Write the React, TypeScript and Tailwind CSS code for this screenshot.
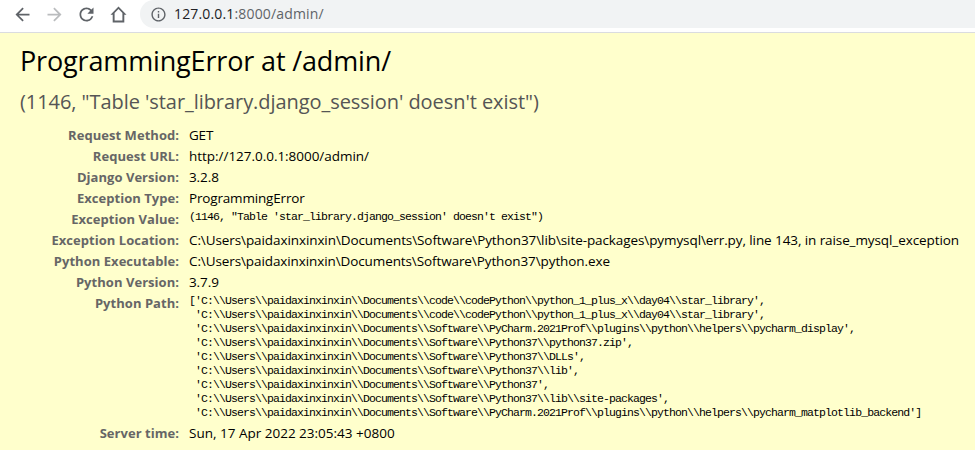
import { MdArrowBack, MdArrowForward, MdInfoOutline, MdRefresh } from 'react-icons/md';

const sans = "font-['Open_Sans','Noto_Sans',sans-serif]";
const mono = "font-['Liberation_Mono',monospace]";

const pythonPath = [
  "['C:\\\\Users\\\\paidaxinxinxin\\\\Documents\\\\code\\\\codePython\\\\python_1_plus_x\\\\day04\\\\star_library',",
  " 'C:\\\\Users\\\\paidaxinxinxin\\\\Documents\\\\code\\\\codePython\\\\python_1_plus_x\\\\day04\\\\star_library',",
  " 'C:\\\\Users\\\\paidaxinxinxin\\\\Documents\\\\Software\\\\PyCharm.2021Prof\\\\plugins\\\\python\\\\helpers\\\\pycharm_display',",
  " 'C:\\\\Users\\\\paidaxinxinxin\\\\Documents\\\\Software\\\\Python37\\\\python37.zip',",
  " 'C:\\\\Users\\\\paidaxinxinxin\\\\Documents\\\\Software\\\\Python37\\\\DLLs',",
  " 'C:\\\\Users\\\\paidaxinxinxin\\\\Documents\\\\Software\\\\Python37\\\\lib',",
  " 'C:\\\\Users\\\\paidaxinxinxin\\\\Documents\\\\Software\\\\Python37',",
  " 'C:\\\\Users\\\\paidaxinxinxin\\\\Documents\\\\Software\\\\Python37\\\\lib\\\\site-packages',",
  " 'C:\\\\Users\\\\paidaxinxinxin\\\\Documents\\\\Software\\\\PyCharm.2021Prof\\\\plugins\\\\python\\\\helpers\\\\pycharm_matplotlib_backend']",
].join('\n');

type Row = { label: string; value: string; pre?: boolean; tall?: boolean; track?: string };

const rows: Row[] = [
  { label: 'Request Method:', value: 'GET', track: 'tracking-[-0.2px]' },
  { label: 'Request URL:', value: 'http://127.0.0.1:8000/admin/', track: 'tracking-[-0.03px]' },
  { label: 'Django Version:', value: '3.2.8', track: 'tracking-[-0.1px]' },
  { label: 'Exception Type:', value: 'ProgrammingError', track: 'tracking-[-0.17px]' },
  { label: 'Exception Value:', value: `(1146, "Table 'star_library.django_session' doesn't exist")`, pre: true },
  {
    label: 'Exception Location:',
    value:
      'C:\\Users\\paidaxinxinxin\\Documents\\Software\\Python37\\lib\\site-packages\\pymysql\\err.py, line 143, in raise_mysql_exception',
    track: 'tracking-[-0.09px]',
  },
  {
    label: 'Python Executable:',
    value: 'C:\\Users\\paidaxinxinxin\\Documents\\Software\\Python37\\python.exe',
    track: 'tracking-[-0.1px]',
  },
  { label: 'Python Version:', value: '3.7.9', track: 'tracking-[-0.1px]' },
  { label: 'Python Path:', value: pythonPath, pre: true, tall: true },
  { label: 'Server time:', value: 'Sun, 17 Apr 2022 23:05:43 +0800', track: 'tracking-normal' },
];

function HomeIcon() {
  return (
    <svg width="21" height="21" viewBox="-2.5 -2.5 21 21" fill="#5f6368">
      <path fillRule="evenodd" d="M8 0L0 8.2h2.2V16h11.6V8.2H16zM8 2.6l3.9 4V14.1H4.1V6.6z" />
    </svg>
  );
}

function Toolbar() {
  return (
    <div className="flex h-[33px] shrink-0 items-start border-b border-[#dadce0] bg-white">
      <div className="flex h-7 w-[140px] shrink-0 items-center gap-[11px] pl-[11.5px] text-[#5f6368]">
        <MdArrowBack size={21} />
        <MdArrowForward size={21} className="text-[#babcbe]" />
        <MdRefresh size={21} />
        <HomeIcon />
      </div>
      <div className="flex h-7 flex-1 items-center rounded-l-full bg-[#f1f3f4] pl-[9.5px]">
        <MdInfoOutline size={17} className="text-[#5f6368]" />
        <div className="ml-[7.5px] whitespace-pre text-sm leading-7 tracking-[0.16px] text-[#5f6368]">
          <span className="text-[#202124]">127.0.0.1</span>:8000/admin/
        </div>
      </div>
    </div>
  );
}

export default function App() {
  return (
    <div className={`flex h-[450px] w-[975px] flex-col overflow-hidden bg-[#ffffcc] ${sans}`}>
      <Toolbar />
      <main className="flex flex-col pl-5">
        <h1 className="mt-[10px] h-9 whitespace-pre text-[27px] leading-9 tracking-[-0.15px] text-black">
          ProgrammingError at /admin/
        </h1>
        <h2 className="mt-[9px] h-7 whitespace-pre text-[20px] leading-7 tracking-[-0.06px] text-[#555]">
          {`(1146, "Table 'star_library.django_session' doesn't exist")`}
        </h2>
        <div className="mt-[9px] flex flex-col">
          {rows.map((r) => (
            <div key={r.label} className={r.tall ? 'flex h-[130px]' : 'flex h-[21px]'}>
              <div className="flex w-[159px] shrink-0 justify-end whitespace-pre text-[13px] font-bold leading-[21px] tracking-[0.04px] text-[#666]">
                {r.label}
              </div>
              {r.pre ? (
                <pre className={`ml-[10px] pt-px text-[11.5px] leading-[14px] tracking-[-0.9px] text-black ${mono}`}>
                  {r.value}
                </pre>
              ) : (
                <div className={`ml-[10px] whitespace-pre text-[13.5px] leading-[21px] text-black ${r.track}`}>
                  {r.value}
                </div>
              )}
            </div>
          ))}
        </div>
      </main>
    </div>
  );
}
